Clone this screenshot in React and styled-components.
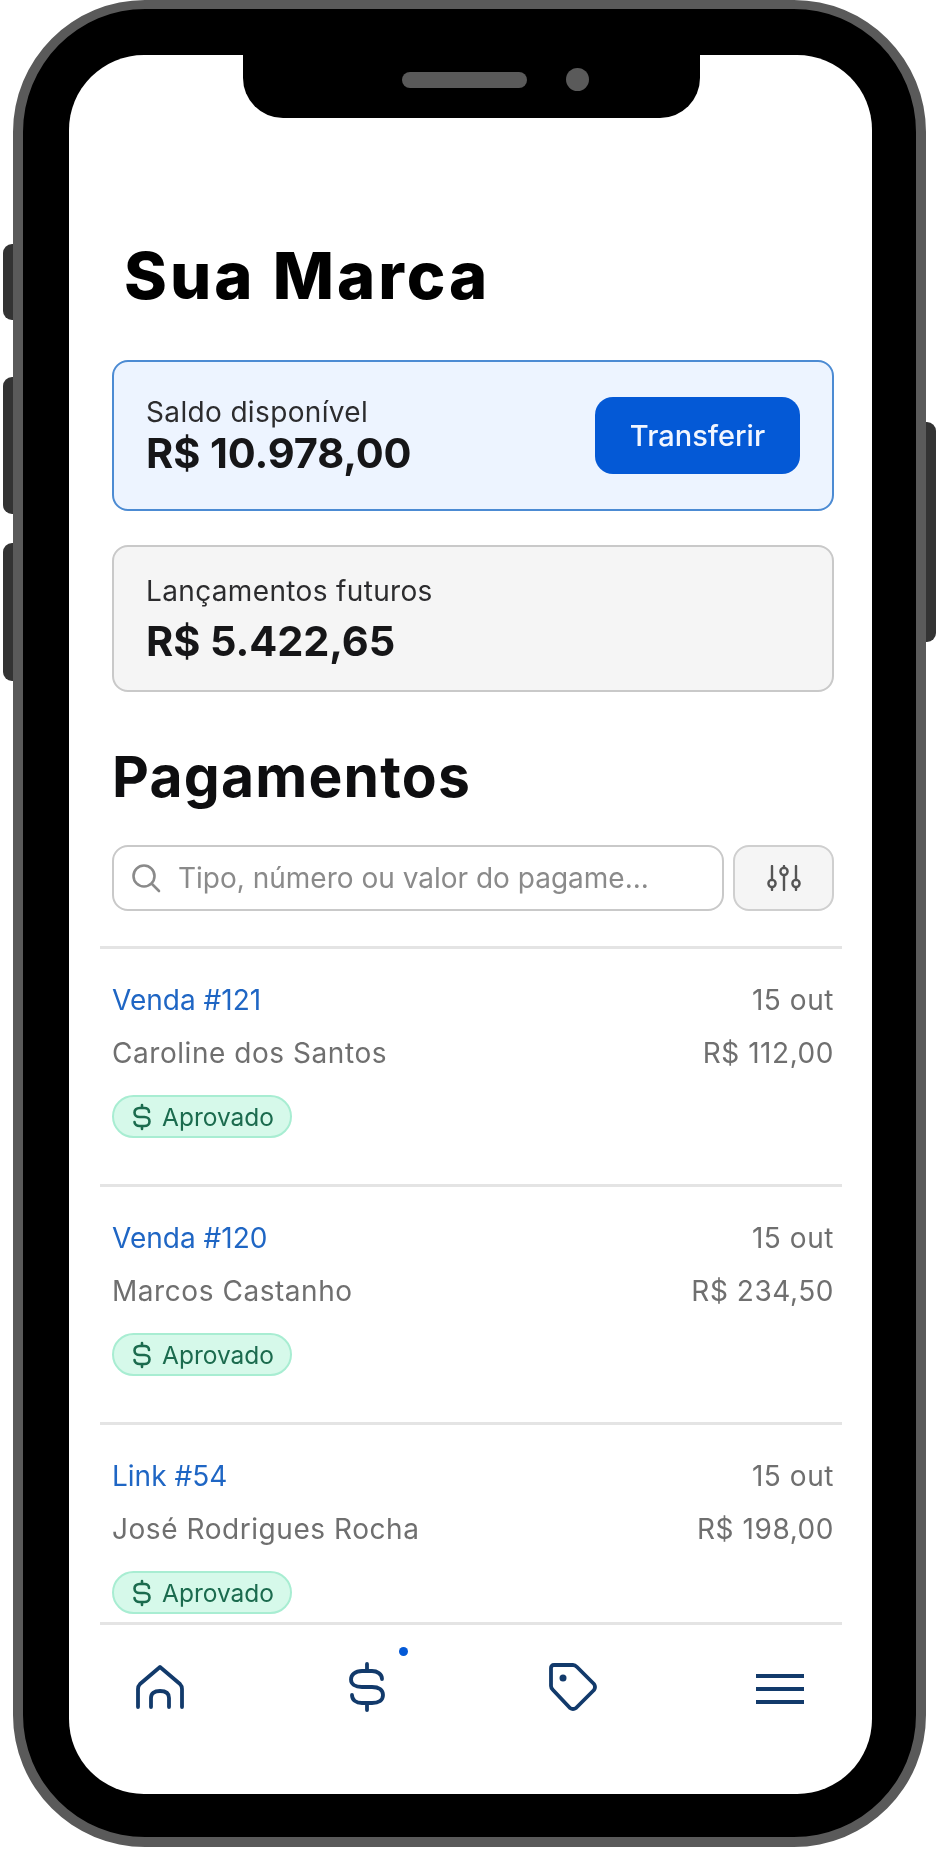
import React from "react";
import styled, { createGlobalStyle } from "styled-components";

const Global = createGlobalStyle`
  html, body { margin: 0; padding: 0; background: #fff; }
  body { font-family: "Inter", "Liberation Sans", sans-serif; }
  * { box-sizing: border-box; }
`;

const Page = styled.div`
  width: 938px;
  height: 1875px;
  padding-left: 13px;
  background: #fff;
`;

const Phone = styled.div`
  position: relative;
  width: 913px;
  height: 1847px;
  padding: 46px 44px 43px 46px;
  background: #000;
  border: 10px solid #5a5a5a;
  border-top-width: 9px;
  border-radius: 132px;
`;

const SideButton = styled.span`
  position: absolute;
  top: ${(p) => p.$top}px;
  height: ${(p) => p.$h}px;
  width: 10px;
  background: #333;
  ${(p) =>
    p.$right
      ? "right: -20px; border-radius: 0 9px 9px 0;"
      : "left: -20px; border-radius: 9px 0 0 9px;"}
`;

const Notch = styled.div`
  position: absolute;
  top: 46px;
  left: 220px;
  width: 457px;
  height: 63px;
  display: flex;
  align-items: center;
  justify-content: center;
  gap: 39px;
  padding: 0 0 14px 48px;
  background: #000;
  border-radius: 0 0 40px 40px;
`;

const Speaker = styled.span`
  width: 125px;
  height: 16px;
  border-radius: 8px;
  background: #5a5a5a;
`;

const Camera = styled.span`
  width: 23px;
  height: 23px;
  border-radius: 50%;
  background: #5a5a5a;
`;

const Screen = styled.div`
  height: 100%;
  padding: 0 30px 0 31px;
  background: #fff;
  border-radius: 75px;
  overflow: hidden;
`;

const Brand = styled.h1`
  margin: 0;
  padding: 187px 0 0 24px;
  height: 305px;
  font-family: "Inter", sans-serif;
  font-weight: 800;
  font-size: 65px;
  line-height: 68px;
  letter-spacing: 3px;
  color: #000;
`;

const Soft = styled.div`
  filter: blur(0.45px);
`;

const Section = styled.div`
  padding: 0 8px 0 12px;
`;

const Card = styled.div`
  display: flex;
  align-items: center;
  justify-content: space-between;
  height: ${(p) => p.$h}px;
  margin-bottom: ${(p) => p.$mb}px;
  padding: 0 32px 0 32px;
  border: 2px solid ${(p) => (p.$active ? "#4c8bd3" : "#c9c9c9")};
  border-radius: 16px;
  background: ${(p) => (p.$active ? "#edf4ff" : "#f5f5f5")};
`;

const CardText = styled.div`
  display: flex;
  flex-direction: column;
  gap: ${(p) => p.$gap}px;
`;

const CardLabel = styled.span`
  font-size: 28px;
  line-height: 32px;
  letter-spacing: 0.35px;
  color: #2c2c2e;
`;

const CardValue = styled.span`
  font-size: 41.5px;
  line-height: 44px;
  font-weight: 700;
  letter-spacing: -0.1px;
  color: #161618;
`;

const TransferButton = styled.button`
  width: 205px;
  height: 77px;
  border: 0;
  border-radius: 18px;
  background: #0459d6;
  color: #f2f6ff;
  font: 500 29px "Inter", sans-serif;
`;

const Heading = styled.h2`
  margin: 0;
  padding: 49px 0 0 0;
  height: 153px;
  font-size: 57px;
  line-height: 72px;
  letter-spacing: 1.2px;
  font-weight: 700;
  color: #0e0e10;
`;

const SearchRow = styled.div`
  display: flex;
  gap: 9px;
  height: 66px;
  margin-bottom: 35px;
`;

const SearchBox = styled.div`
  flex: 1;
  display: flex;
  align-items: center;
  gap: 17px;
  padding-left: 17px;
  border: 2px solid #c9c9c9;
  border-radius: 16px;
  background: #fff;
  font-size: 28px;
  color: #8a8a8a;
`;

const FilterButton = styled.div`
  width: 101px;
  display: flex;
  align-items: center;
  justify-content: center;
  border: 2px solid #cfcfcf;
  border-radius: 16px;
  background: #f5f5f5;
`;

const List = styled.div`
  height: 676px;
  overflow: hidden;
`;

const Row = styled.div`
  height: 238px;
  padding: 34px 8px 0 12px;
  border-top: 3px solid #e4e4e4;
`;

const RowLine = styled.div`
  display: flex;
  justify-content: space-between;
  height: 34px;
  margin-bottom: ${(p) => p.$mb}px;
  font-size: 28px;
  line-height: 34px;
  letter-spacing: 0.55px;
  color: #6f6f6f;
`;

const RowTitle = styled.span`
  letter-spacing: 0;
  color: #1f66c4;
`;

const Badge = styled.span`
  display: inline-flex;
  align-items: center;
  gap: 10px;
  height: 43px;
  width: 180px;
  padding-left: 18px;
  border: 2px solid #a8edd2;
  border-radius: 22px;
  background: #d6f9ea;
  color: #1b6b4e;
  font-size: 24.5px;
`;

const Nav = styled.div`
  height: 172px;
  display: flex;
  align-items: flex-start;
  padding: 40px 38px 0 35px;
  border-top: 3px solid #e4e4e4;
`;

const NavItem = styled.div`
  position: relative;
  display: flex;
  margin-top: ${(p) => p.$mt || 0}px;
  margin-left: ${(p) => p.$ml || 0}px;
`;

const NavDot = styled.span`
  position: absolute;
  top: -15px;
  right: -22px;
  width: 9px;
  height: 9px;
  border-radius: 50%;
  background: #0459d6;
`;

const SearchGlyph = () => (
  <svg width="30" height="30" viewBox="0 0 30 30" fill="none" stroke="#8a8a8a" strokeWidth="2.6" strokeLinecap="round">
    <circle cx="13" cy="13" r="10.5" />
    <path d="M21 21l7 7" />
  </svg>
);

const SlidersGlyph = () => (
  <svg width="36" height="26" viewBox="0 0 36 26" fill="none" stroke="#555" strokeWidth="2.4" strokeLinecap="round">
    <path d="M6 1v14M18 10v15M30 1v14M6 22v3M18 1v2M30 22v3" />
    <circle cx="6" cy="18.5" r="3.6" />
    <circle cx="18" cy="6.5" r="3.6" />
    <circle cx="30" cy="18.5" r="3.6" />
  </svg>
);

const DollarSmall = () => (
  <svg width="20" height="28" viewBox="0 0 20 28" fill="none" stroke="#1b6b4e" strokeWidth="2.6" strokeLinecap="round">
    <path d="M10 2v3M10 23v3M17 9c0-2.500-2-4-4.500-4h-5C4.500 5 2.500 7 2.500 9.500S4.500 14 7.500 14h5c3 0 5 2 5 4.500S15.500 23 12.500 23h-5C5 23 2.500 21.500 2.500 19" />
  </svg>
);

const navStroke = { fill: "none", stroke: "#123a6b", strokeWidth: 3.8, strokeLinecap: "round", strokeLinejoin: "round" };

const HomeGlyph = () => (
  <svg width="50" height="44" viewBox="0 0 50 44" {...navStroke}>
    <path d="M3 42V24Q3 21 5 19L25 2L45 19Q47 21 47 24V42" />
    <path d="M16 42V33Q16 26 25 26Q34 26 34 33V42" />
  </svg>
);

const DollarGlyph = () => (
  <svg width="38" height="50" viewBox="0 0 38 50" {...navStroke}>
    <path d="M19 2V9M19 41V48M34 17C34 12 29 9 24 9H14C7 9 3 13 3 17.500C3 22 7 25 14 25H24C31 25 35 28 35 33C35 38 31 41 24 41H14C8 41 4 38 4 33" />
  </svg>
);

const TagGlyph = () => (
  <svg width="50" height="50" viewBox="0 0 50 50" {...navStroke}>
    <path d="M3 6Q3 3 6 3H25Q27 3 29 5L46 22Q48 25 46 28L28 46Q25 48 22 46L5 28Q3 26 3 24Z" />
    <circle cx="15" cy="16" r="3.500" fill="#123a6b" stroke="none" />
  </svg>
);

const MenuGlyph = () => (
  <svg width="48" height="32" viewBox="0 0 48 32" fill="none" stroke="#123a6b" strokeWidth="4">
    <path d="M0 3H48M0 16H48M0 29H48" />
  </svg>
);

const payments = [
  { title: "Venda #121", name: "Caroline dos Santos", value: "R$ 112,00" },
  { title: "Venda #120", name: "Marcos Castanho", value: "R$ 234,50" },
  { title: "Link #54", name: "José Rodrigues Rocha", value: "R$ 198,00" },
];

export default function App() {
  return (
    <Page>
      <Global />
      <Phone>
        <SideButton $top={235} $h={76} />
        <SideButton $top={368} $h={137} />
        <SideButton $top={534} $h={138} />
        <SideButton $right $top={413} $h={220} />
        <Notch>
          <Speaker />
          <Camera />
        </Notch>
        <Screen>
          <Brand>Sua Marca</Brand>
          <Soft>
            <Section>
              <Card $active $h={151} $mb={34}>
                <CardText $gap={3}>
                  <CardLabel>Saldo disponível</CardLabel>
                  <CardValue>R$ 10.978,00</CardValue>
                </CardText>
                <TransferButton>Transferir</TransferButton>
              </Card>
              <Card $h={147} $mb={0}>
                <CardText $gap={12}>
                  <CardLabel>Lançamentos futuros</CardLabel>
                  <CardValue>R$ 5.422,65</CardValue>
                </CardText>
              </Card>
              <Heading>Pagamentos</Heading>
              <SearchRow>
                <SearchBox>
                  <SearchGlyph />
                  <span>Tipo, número ou valor do pagame...</span>
                </SearchBox>
                <FilterButton>
                  <SlidersGlyph />
                </FilterButton>
              </SearchRow>
            </Section>
            <List>
              {payments.map((p) => (
                <Row key={p.title}>
                  <RowLine $mb={19}>
                    <RowTitle>{p.title}</RowTitle>
                    <span>15 out</span>
                  </RowLine>
                  <RowLine $mb={25}>
                    <span>{p.name}</span>
                    <span>{p.value}</span>
                  </RowLine>
                  <Badge>
                    <DollarSmall />
                    Aprovado
                  </Badge>
                </Row>
              ))}
            </List>
            <Nav>
              <NavItem><HomeGlyph /></NavItem>
              <NavItem $mt={-3} $ml={163}>
                <DollarGlyph />
                <NavDot />
              </NavItem>
              <NavItem $mt={-3} $ml={162}><TagGlyph /></NavItem>
              <NavItem $mt={8} $ml={158}><MenuGlyph /></NavItem>
            </Nav>
          </Soft>
        </Screen>
      </Phone>
    </Page>
  );
}
